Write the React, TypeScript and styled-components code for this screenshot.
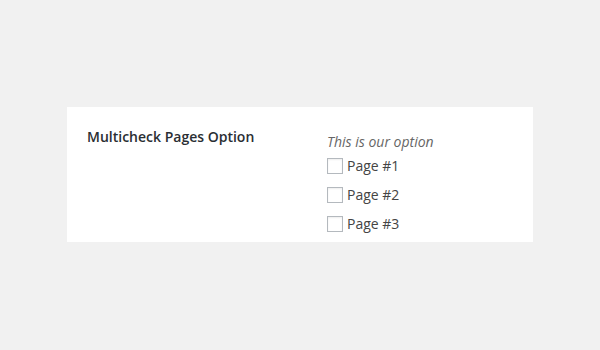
import React from "react";
import styled, { createGlobalStyle } from "styled-components";

const GlobalStyle = createGlobalStyle`
  html, body {
    margin: 0;
    padding: 0;
    background: #f1f1f1;
  }
  body {
    font-family: "Open Sans", "Liberation Sans", sans-serif;
    font-size: 14px;
    color: #444;
  }
`;

const Page = styled.div`
  padding: 107px 0;
  display: flex;
  justify-content: center;
`;

const Panel = styled.div`
  width: 466px;
  height: 135px;
  box-sizing: border-box;
  background: #fff;
  display: flex;
  padding: 0 20px;
`;

const Label = styled.div`
  width: 240px;
  padding-top: 19px;
  font-weight: 600;
  line-height: 21px;
  color: #2a2e33;
`;

const Field = styled.div`
  padding-top: 24px;
  display: flex;
  flex-direction: column;
`;

const Description = styled.div`
  font-style: italic;
  line-height: 21px;
  color: #666;
  margin-bottom: 3px;
`;

const Option = styled.label`
  display: flex;
  align-items: center;
  gap: 4px;
  height: 21px;
  margin-bottom: 8px;
  line-height: 21px;
  color: #444;
`;

const Box = styled.span`
  width: 16px;
  height: 16px;
  box-sizing: border-box;
  border: 1px solid #b4b9be;
  background: #fff;
  box-shadow: inset 0 1px 2px rgba(0, 0, 0, 0.07);
`;

const pages = ["Page #1", "Page #2", "Page #3"];

export default function App() {
  return (
    <>
      <GlobalStyle />
      <Page>
        <Panel>
          <Label>Multicheck Pages Option</Label>
          <Field>
            <Description>This is our option</Description>
            {pages.map((p) => (
              <Option key={p}>
                <Box />
                {p}
              </Option>
            ))}
          </Field>
        </Panel>
      </Page>
    </>
  );
}
